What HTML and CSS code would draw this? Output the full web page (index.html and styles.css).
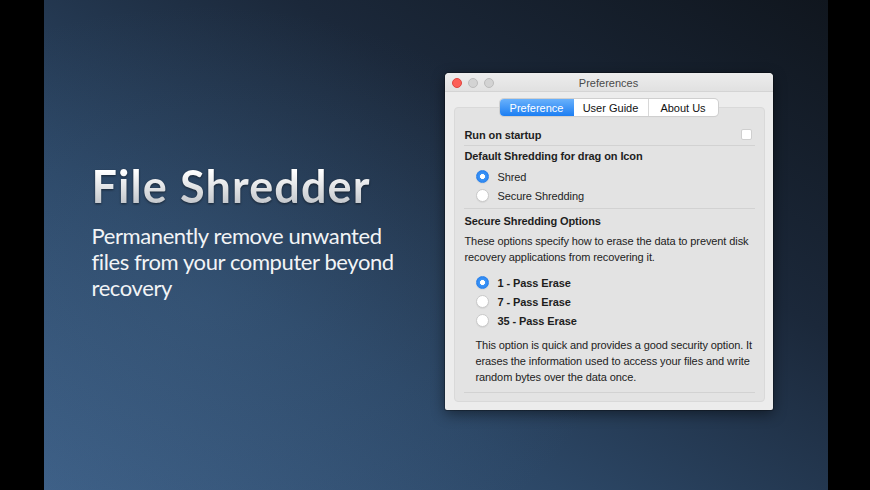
FILE: index.html
```
<!DOCTYPE html>
<html>
	<head>
		<title>File Shredder</title>
		<link rel="stylesheet" href="styles.css">
	</head>
	<body>
		<div class="stage">
			<div class="screen">
				<div class="hero">
					<h1>File Shredder</h1>
					<p>Permanently remove unwanted<br>files from your computer beyond<br>recovery</p>
				</div>

				<div class="window">
					<div class="titlebar">
						<div class="lights">
							<span class="light red"></span>
							<span class="light"></span>
							<span class="light"></span>
						</div>
						<div class="title">Preferences</div>
						<div></div>
					</div>

					<div class="winbody">
						<div class="tabs">
							<span class="tab on">Preference</span>
							<span class="tab">User Guide</span>
							<span class="tab last">About Us</span>
						</div>

						<div class="group">
							<div class="sec first">
								<b>Run on startup</b>
								<span class="check"></span>
							</div>

							<div class="sec">
								<div class="head">Default Shredding for drag on Icon</div>
								<div class="radios">
									<div class="opt"><span class="radio on"></span>Shred</div>
									<div class="opt"><span class="radio"></span>Secure Shredding</div>
								</div>
							</div>

							<div class="sec last">
								<div class="head">Secure Shredding Options</div>
								<p class="note">These options specify how to erase the data to prevent disk<br>recovery applications from recovering it.</p>
								<div class="radios passes">
									<div class="opt"><span class="radio on"></span>1 - Pass Erase</div>
									<div class="opt"><span class="radio"></span>7 - Pass Erase</div>
									<div class="opt"><span class="radio"></span>35 - Pass Erase</div>
								</div>
								<p class="note indent">This option is quick and provides a good security option. It<br>erases the information used to access your files and write<br>random bytes over the data once.</p>
							</div>
						</div>
					</div>
				</div>
			</div>
		</div>
	</body>
</html>
```

FILE: styles.css
```
body {
	margin: 0;
	background: #000;
}

.stage {
	display: flex;
	justify-content: center;
	height: 490px;
	background: #000;
}

.screen {
	width: 784px;
	height: 490px;
	margin-left: 1px;
	display: flex;
	align-items: flex-start;
	padding-left: 48px;
	box-sizing: border-box;
	background:
		radial-gradient(ellipse 420px 300px at 20% 62%, rgba(80,120,160,0.18), rgba(80,120,160,0) 100%),
		linear-gradient(to top right, #3d5f86 0%, #2c4766 33%, #1b283a 66%, #10161e 100%);
}

/* left text */
.hero {
	width: 353px;
	flex-shrink: 0;
	padding-top: 161px;
}

.hero h1 {
	margin: 0;
	font: bold 45px/50px Lato, "Open Sans", sans-serif;
	letter-spacing: 1.1px;
	color: #e6e8ea;
	background: linear-gradient(#ffffff 20%, #bfc3c8 90%);
	-webkit-background-clip: text;
	background-clip: text;
	-webkit-text-fill-color: transparent;
	filter: drop-shadow(0 1px 1px rgba(0,0,0,0.5));
}

.hero p {
	margin: 12px 0 0;
	font: 22px/26px Lato, "Open Sans", sans-serif;
	color: #f2f4f6;
	letter-spacing: -0.4px;
}

/* preferences window */
.window {
	width: 328px;
	height: 337px;
	flex-shrink: 0;
	margin-top: 73px;
	background: #ececec;
	border-radius: 4px 4px 2px 2px;
	box-shadow: 0 0 0 1px rgba(0,0,0,0.25), 0 4px 14px rgba(0,0,0,0.45);
	font-family: "Liberation Sans", Arial, sans-serif;
	font-size: 11px;
	letter-spacing: -0.1px;
	color: #1e1e1e;
	display: flex;
	flex-direction: column;
	overflow: hidden;
}

.titlebar {
	height: 18px;
	flex-shrink: 0;
	display: grid;
	grid-template-columns: 1fr auto 1fr;
	align-items: center;
	background: linear-gradient(#ededed, #e1e1e1);
	border-bottom: 1px solid #d4d4d4;
	border-radius: 4px 4px 0 0;
}

.lights {
	display: flex;
	gap: 6px;
	padding-left: 7px;
	padding-top: 2px;
}

.light {
	width: 10px;
	height: 10px;
	border-radius: 50%;
	box-sizing: border-box;
	background: #d3d3d3;
	border: 1px solid #bcbcbc;
}

.light.red {
	background: #fc5f57;
	border-color: #df4640;
}

.title {
	color: #4a4a4a;
	font-size: 11px;
	letter-spacing: 0;
	padding-top: 2px;
}

.winbody {
	flex: 1;
	display: flex;
	flex-direction: column;
}

.tabs {
	position: relative;
	z-index: 1;
	flex-shrink: 0;
	align-self: flex-start;
	margin: 7px 0 0 55px;
	display: flex;
	height: 17px;
	background: #fff;
	border-radius: 4px;
	box-shadow: 0 0 0 1px #cfcfcf, 0 1px 1px rgba(0,0,0,0.08);
}

.tab {
	display: flex;
	align-items: center;
	justify-content: center;
	width: 74px;
	border-right: 1px solid #d8d8d8;
	color: #111;
	font-size: 11px;
	letter-spacing: 0;
}

.tab.on {
	color: #fff;
	background: linear-gradient(#69b1fb, #1c7ef3);
	border-radius: 4px 0 0 4px;
	border-right: none;
}

.tab.last {
	width: 69px;
	border-right: none;
}

.group {
	flex-shrink: 0;
	margin: -9px 8px 0 9px;
	padding: 16px 9px 8px;
	background: #e3e3e3;
	border: 1px solid #d9d9d9;
	border-radius: 4px;
}

.sec {
	border-bottom: 1px solid #d2d2d2;
	padding: 2px 0 3px;
}

.sec.first {
	height: 21px;
	padding: 0;
	display: flex;
	align-items: center;
	justify-content: space-between;
}

.sec.last {
	padding: 4px 0 7px;
}

.sec b,
.head {
	font-weight: bold;
	line-height: 16px;
	padding-left: 1px;
}

.check {
	width: 11px;
	height: 11px;
	margin-right: 3px;
	background: #fff;
	border: 1px solid #cfcfcf;
	border-radius: 2px;
	box-sizing: border-box;
}

.radios {
	margin-top: 3px;
	padding-left: 12px;
}

.radios.passes {
	margin-top: 8px;
	font-weight: bold;
}

.opt {
	height: 19px;
	display: flex;
	align-items: center;
}

.radio {
	width: 13px;
	height: 13px;
	margin-right: 9px;
	border-radius: 50%;
	box-sizing: border-box;
	background: #fff;
	border: 1px solid #c9c9c9;
	box-shadow: 0 1px 1px rgba(0,0,0,0.06);
}

.radio.on {
	border-color: #2b82ea;
	background: radial-gradient(circle, #fff 0 2.2px, #3d95f6 2.8px, #1f7bef 100%);
}

.note {
	margin: 4px 0 0;
	line-height: 16px;
	padding-left: 1px;
	white-space: nowrap;
	color: #222;
}

.note.indent {
	margin-top: 7px;
	padding-left: 12px;
}
```
